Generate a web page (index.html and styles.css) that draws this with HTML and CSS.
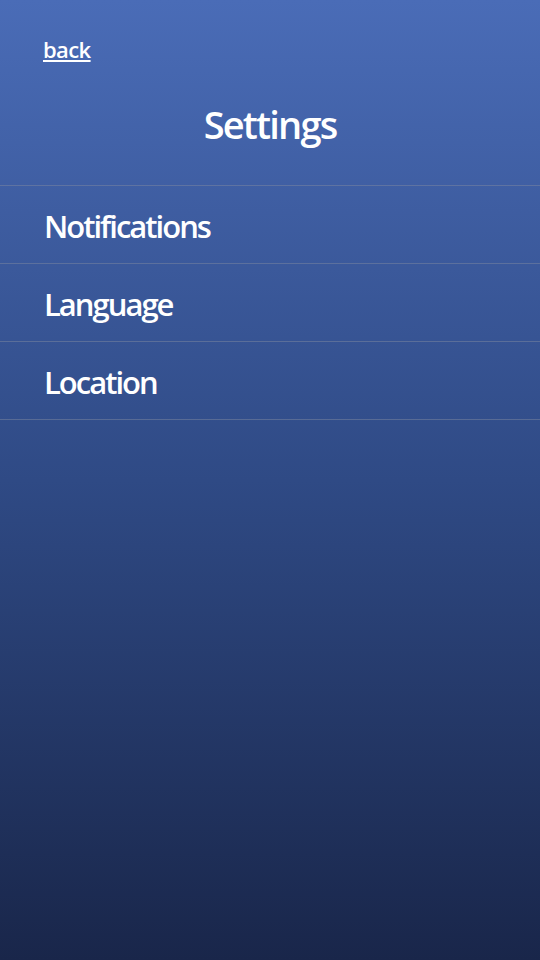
FILE: index.html
```html
<!DOCTYPE html>
<html lang="en">
<head>
<meta charset="utf-8">
<title>Settings</title>
<link rel="stylesheet" href="styles.css">
</head>
<body>
<div class="screen">
  <header class="header">
    <a class="back" href="#">back</a>
    <h1 class="title">Settings</h1>
  </header>
  <ul class="menu">
    <li class="item">Notifications</li>
    <li class="item">Language</li>
    <li class="item">Location</li>
  </ul>
</div>
</body>
</html>
```
FILE: styles.css
```css
html, body {
  margin: 0;
  padding: 0;
  height: 100%;
}
body {
  font-family: "Open Sans", "Noto Sans", sans-serif;
  color: #fff;
  background: linear-gradient(to bottom, #4a6cb7 0%, #2f4a85 50%, #19264a 100%);
  min-height: 960px;
}
.screen {
  display: flex;
  flex-direction: column;
}
.header {
  display: flex;
  flex-direction: column;
  padding: 34px 43px 0;
  height: 186px;
  box-sizing: border-box;
  border-bottom: 1px solid rgba(125, 135, 160, 0.5);
}
.back {
  align-self: flex-start;
  color: #fff;
  font-size: 22px;
  font-weight: 600;
  letter-spacing: -0.6px;
  line-height: 30px;
  text-decoration: underline;
  text-decoration-thickness: 2px;
  text-underline-offset: 2px;
}
.title {
  margin: 38px 0 0;
  text-align: center;
  font-size: 38px;
  font-weight: 600;
  letter-spacing: -1.8px;
  line-height: 44px;
}
.menu {
  list-style: none;
  margin: 0;
  padding: 0;
}
.item {
  height: 78px;
  box-sizing: border-box;
  display: flex;
  align-items: center;
  padding: 2px 44px 0;
  font-size: 31px;
  font-weight: 600;
  letter-spacing: -2px;
  border-bottom: 1px solid rgba(125, 135, 160, 0.5);
}
```
